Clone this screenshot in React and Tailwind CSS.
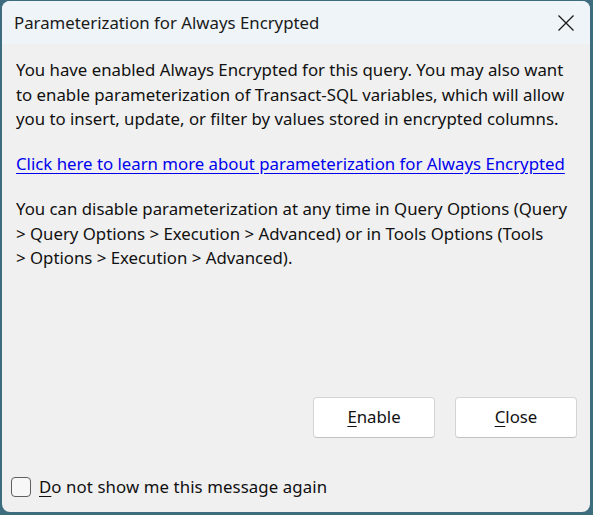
import React from "react";

export default function App() {
  return (
    <div
      className="w-[593px] h-[515px] bg-[#3d6c7e] pt-[1px] pl-[2px] pr-[3px] pb-[3px] overflow-hidden"
      style={{ fontFamily: '"Segoe UI", "Noto Sans", "Open Sans", sans-serif' }}
    >
      <div className="w-full h-full bg-[#f0f0f0] rounded-[8px] overflow-hidden flex flex-col">
        <div className="h-[43px] shrink-0 bg-[#eef4f8] flex items-center justify-between pl-[12px] pr-[15px]">
          <span className="text-[16.8px] text-[#1a1a1a]">Parameterization for Always Encrypted</span>
          <svg width="18" height="18" viewBox="0 0 18 18" className="mt-[1px]">
            <path d="M1.5 1.5 L16.5 16.5 M16.5 1.5 L1.5 16.5" stroke="#1a1a1a" strokeWidth="1.3" fill="none" />
          </svg>
        </div>
        <div className="flex-1 flex flex-col pl-[14px] pr-[12px] pt-[14px] text-[16.8px] leading-[24.5px] text-[#111]">
          <p>
            You have enabled Always Encrypted for this query. You may also want to enable parameterization of
            Transact-SQL variables, which will allow you to insert, update, or filter by values stored in encrypted
            columns.
          </p>
          <a href="#" className="mt-[20px] text-[#0000ee] underline underline-offset-[3px]">
            Click here to learn more about parameterization for Always Encrypted
          </a>
          <p className="mt-[21px]">
            You can disable parameterization at any time in Query Options (Query &gt; Query Options &gt; Execution
            &gt; Advanced) or in Tools Options (Tools
            <br />
            &gt; Options &gt; Execution &gt; Advanced).
          </p>
          <div className="flex-1" />
          <div className="flex justify-end gap-[20px] pr-[1px]">
            <button className="w-[122px] h-[41px] bg-white border border-[#d4d4d4] border-b-[#c2c2c2] rounded-[4px] text-[16.8px] text-[#111] pt-[1px]">
              <span className="underline underline-offset-[3px]">E</span>nable
            </button>
            <button className="w-[122px] h-[41px] bg-white border border-[#d4d4d4] border-b-[#c2c2c2] rounded-[4px] text-[16.8px] text-[#111] pt-[1px]">
              <span className="underline underline-offset-[3px]">C</span>lose
            </button>
          </div>
          <div className="h-[37px]" />
          <label className="flex items-center gap-[8px] -ml-[5px] mb-[13px]">
            <span className="w-[20px] h-[20px] rounded-[4px] border border-[#5f5f5f] bg-[#f7f7f7]" />
            <span className="tracking-[0.1px]">
              <span className="underline underline-offset-[3px]">D</span>o not show me this message again
            </span>
          </label>
        </div>
      </div>
    </div>
  );
}
